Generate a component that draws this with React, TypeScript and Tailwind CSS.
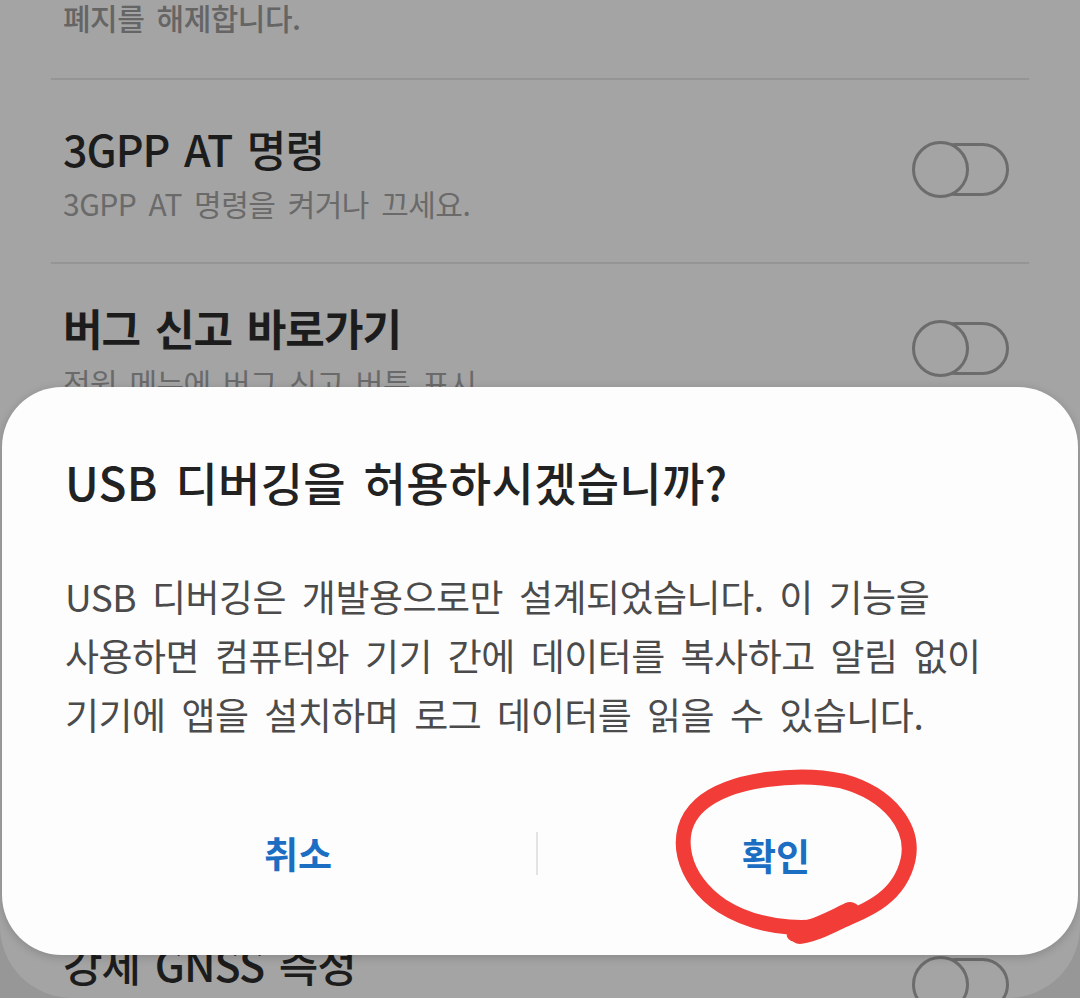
import React from "react";

function Toggle() {
  return (
    <div className="relative h-[57px] w-[97px] shrink-0">
      <div className="absolute right-0 top-[2px] h-[53px] w-[80px] rounded-full border-[3px] border-[#6c6c6c]" />
      <div className="absolute left-0 top-0 h-[57px] w-[57px] rounded-full border-[3px] border-[#6c6c6c] bg-[#a4a4a4]" />
    </div>
  );
}

function Divider() {
  return <div className="h-[2px] bg-[#959595]" />;
}

function Row({
  title,
  sub,
  bold,
  h,
  pt,
}: {
  title: string;
  sub: string;
  bold?: boolean;
  h: string;
  pt: string;
}) {
  return (
    <div className={`flex items-start justify-between pl-[12px] pr-[20px] ${h} ${pt}`}>
      <div className="flex flex-col">
        <div
          className={`whitespace-nowrap text-[43px] leading-[46px] tracking-[-1px] text-[#1c1c1c] [word-spacing:6px] ${
            bold ? "font-bold" : "font-medium"
          }`}
        >
          {title}
        </div>
        <div className="mt-[14px] whitespace-nowrap text-[30px] leading-[36px] tracking-[-0.5px] text-[#6a6a6a] [word-spacing:6px]">
          {sub}
        </div>
      </div>
      <div className="mt-[16px]">
        <Toggle />
      </div>
    </div>
  );
}

export default function App() {
  return (
    <div className="relative h-[998px] w-[1080px] overflow-hidden bg-[#979797] font-['Noto_Sans_CJK_KR',sans-serif]">
      <div className="h-full w-full overflow-hidden rounded-b-[72px] bg-[#a4a4a4]">
        <div className="px-[51px]">
          <div className="h-[78px] pl-[12px]">
            <div className="whitespace-nowrap text-[30px] font-medium leading-[34px] tracking-[-0.5px] text-[#656565] [word-spacing:6px]">
              폐지를 해제합니다.
            </div>
          </div>
          <Divider />
          <Row title="3GPP AT 명령" sub="3GPP AT 명령을 켜거나 끄세요." h="h-[182px]" pt="pt-[45px]" />
          <Divider />
          <Row title="버그 신고 바로가기" sub="전원 메뉴에 버그 신고 버튼 표시" bold h="h-[182px]" pt="pt-[40px]" />
          <Divider />
          <Row title="USB 디버깅" sub="USB 연결 시 디버그 모드 실행" h="h-[182px]" pt="pt-[45px]" />
          <Divider />
          <Row title="USB 디버깅 권한 승인 취소" sub="승인한 컴퓨터의 권한을 취소합니다." h="h-[261px]" pt="pt-[45px]" />
          <Divider />
          <Row title="강제 GNSS 측정" sub="GNSS 측정을 항상 실행합니다." h="h-[182px]" pt="pt-[45px]" />
        </div>
      </div>

      {/* Dialog */}
      <div className="absolute left-[2px] right-[2px] top-[387px] flex h-[568px] flex-col rounded-[60px] bg-[#fdfdfd] px-[63px] pt-[66px] shadow-[0_2px_10px_rgba(0,0,0,0.18)]">
        <div className="whitespace-nowrap text-[46px] font-medium leading-[56px] tracking-[0.3px] text-[#222222] [word-spacing:7px]">
          USB 디버깅을 허용하시겠습니까?
        </div>
        <div className="mt-[58px] whitespace-nowrap text-[37px] leading-[59px] tracking-[-0.5px] text-[#4b4b4b] [word-spacing:8px]">
          <div>USB 디버깅은 개발용으로만 설계되었습니다. 이 기능을</div>
          <div>사용하면 컴퓨터와 기기 간에 데이터를 복사하고 알림 없이</div>
          <div>기기에 앱을 설치하며 로그 데이터를 읽을 수 있습니다.</div>
        </div>
        <div className="mt-[82px] -mx-[5px] flex items-center">
          <div className="flex flex-1 justify-center text-[37px] font-bold leading-[50px] text-[#1b6ec2]">
            취소
          </div>
          <div className="h-[43px] w-[2px] bg-[#e3e3e3]" />
          <div className="flex flex-1 justify-center pt-[4px] pr-[6px] text-[37px] font-bold leading-[50px] text-[#1b6ec2]">
            확인
          </div>
        </div>
      </div>

      {/* Red hand-drawn circle */}
      <svg
        className="pointer-events-none absolute left-0 top-0"
        width="1080"
        height="998"
        viewBox="0 0 1080 998"
      >
        <path
          d="M 850 915 C 820 935, 760 930, 722 906 C 682 880, 670 832, 700 805 C 730 778, 800 772, 842 781 C 890 794, 915 828, 908 860 C 900 895, 872 910, 832 924 C 815 930, 800 934, 794 934"
          fill="none"
          stroke="#f23c38"
          strokeWidth="15"
          strokeLinecap="round"
          strokeLinejoin="round"
        />
        <path
          d="M 800 933 C 818 930, 835 920, 850 913"
          fill="none"
          stroke="#f23c38"
          strokeWidth="22"
          strokeLinecap="round"
        />
      </svg>
    </div>
  );
}
